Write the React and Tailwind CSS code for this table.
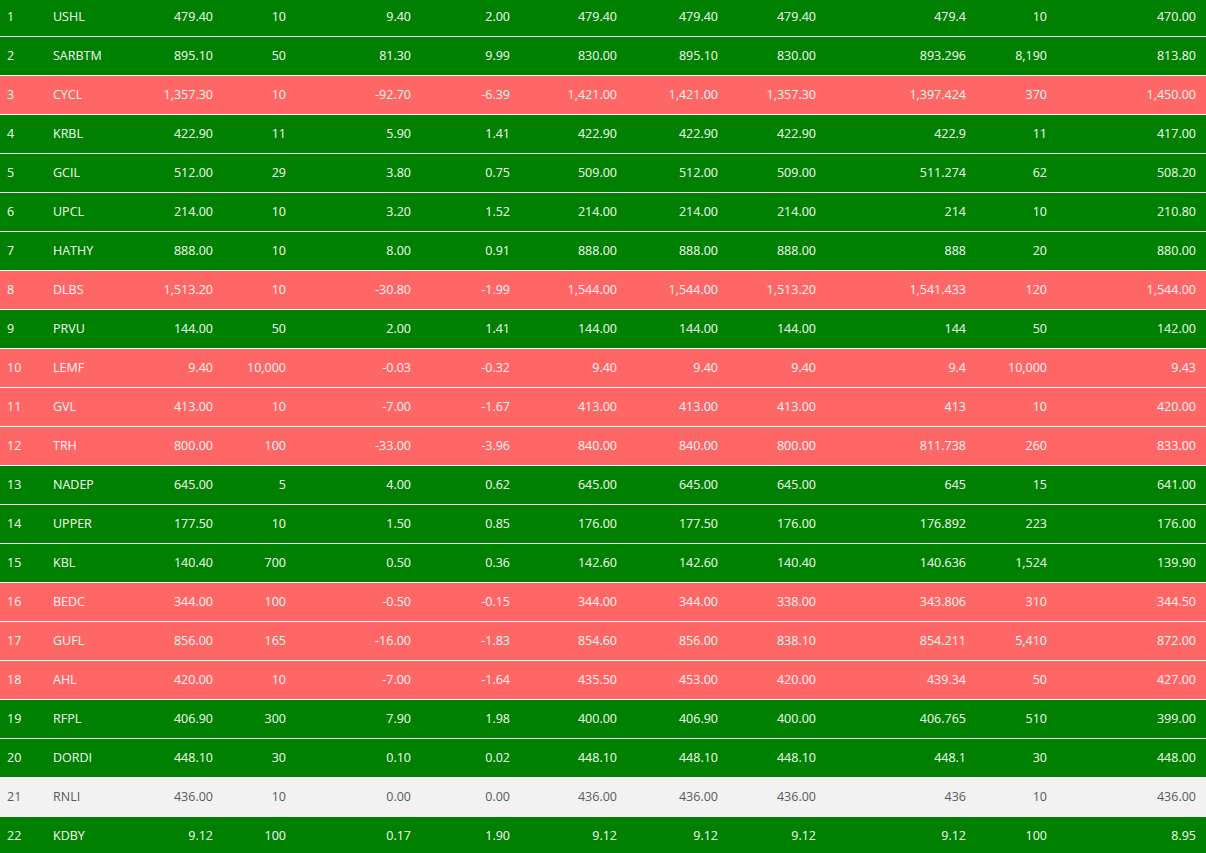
import React from 'react';

const rows = [
  ['1', 'USHL', '479.40', '10', '9.40', '2.00', '479.40', '479.40', '479.40', '479.4', '10', '470.00'],
  ['2', 'SARBTM', '895.10', '50', '81.30', '9.99', '830.00', '895.10', '830.00', '893.296', '8,190', '813.80'],
  ['3', 'CYCL', '1,357.30', '10', '-92.70', '-6.39', '1,421.00', '1,421.00', '1,357.30', '1,397.424', '370', '1,450.00'],
  ['4', 'KRBL', '422.90', '11', '5.90', '1.41', '422.90', '422.90', '422.90', '422.9', '11', '417.00'],
  ['5', 'GCIL', '512.00', '29', '3.80', '0.75', '509.00', '512.00', '509.00', '511.274', '62', '508.20'],
  ['6', 'UPCL', '214.00', '10', '3.20', '1.52', '214.00', '214.00', '214.00', '214', '10', '210.80'],
  ['7', 'HATHY', '888.00', '10', '8.00', '0.91', '888.00', '888.00', '888.00', '888', '20', '880.00'],
  ['8', 'DLBS', '1,513.20', '10', '-30.80', '-1.99', '1,544.00', '1,544.00', '1,513.20', '1,541.433', '120', '1,544.00'],
  ['9', 'PRVU', '144.00', '50', '2.00', '1.41', '144.00', '144.00', '144.00', '144', '50', '142.00'],
  ['10', 'LEMF', '9.40', '10,000', '-0.03', '-0.32', '9.40', '9.40', '9.40', '9.4', '10,000', '9.43'],
  ['11', 'GVL', '413.00', '10', '-7.00', '-1.67', '413.00', '413.00', '413.00', '413', '10', '420.00'],
  ['12', 'TRH', '800.00', '100', '-33.00', '-3.96', '840.00', '840.00', '800.00', '811.738', '260', '833.00'],
  ['13', 'NADEP', '645.00', '5', '4.00', '0.62', '645.00', '645.00', '645.00', '645', '15', '641.00'],
  ['14', 'UPPER', '177.50', '10', '1.50', '0.85', '176.00', '177.50', '176.00', '176.892', '223', '176.00'],
  ['15', 'KBL', '140.40', '700', '0.50', '0.36', '142.60', '142.60', '140.40', '140.636', '1,524', '139.90'],
  ['16', 'BEDC', '344.00', '100', '-0.50', '-0.15', '344.00', '344.00', '338.00', '343.806', '310', '344.50'],
  ['17', 'GUFL', '856.00', '165', '-16.00', '-1.83', '854.60', '856.00', '838.10', '854.211', '5,410', '872.00'],
  ['18', 'AHL', '420.00', '10', '-7.00', '-1.64', '435.50', '453.00', '420.00', '439.34', '50', '427.00'],
  ['19', 'RFPL', '406.90', '300', '7.90', '1.98', '400.00', '406.90', '400.00', '406.765', '510', '399.00'],
  ['20', 'DORDI', '448.10', '30', '0.10', '0.02', '448.10', '448.10', '448.10', '448.1', '30', '448.00'],
  ['21', 'RNLI', '436.00', '10', '0.00', '0.00', '436.00', '436.00', '436.00', '436', '10', '436.00'],
  ['22', 'KDBY', '9.12', '100', '0.17', '1.90', '9.12', '9.12', '9.12', '9.12', '100', '8.95'],
];

// row colour follows the sign of the change column
const rowTone = (change) => {
  const v = parseFloat(change);
  if (v > 0) return 'bg-[#008000] text-[#f4fff0]';
  if (v < 0) return 'bg-[#ff6666] text-[#fff6f6]';
  return 'bg-[#f2f2f2] text-[#5a5a5a]';
};

const App = () => {
  return (
    <div className="w-[1206px] h-[853px] overflow-hidden bg-white font-['Open_Sans',sans-serif] text-[12.5px]">
      <div className="-mt-[2px]">
        {rows.map((r) => (
          <div
            key={r[0]}
            className={`grid grid-cols-[43px_107px_73px_73px_125px_99px_107px_101px_98px_150px_81px_149px] h-[39px] items-center border-b border-white ${rowTone(r[4])}`}
          >
            <div className="pl-[7px]">{r[0]}</div>
            <div className="pl-[10px]">{r[1]}</div>
            {r.slice(2).map((c, i) => (
              <div key={i} className="text-right pr-[10px]">{c}</div>
            ))}
          </div>
        ))}
      </div>
    </div>
  );
};

export default App;
